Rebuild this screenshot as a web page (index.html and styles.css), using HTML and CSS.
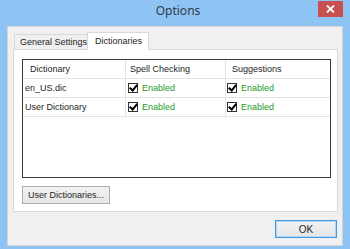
FILE: index.html
```html
<!DOCTYPE html>
<html lang="en">
<head>
  <meta charset="UTF-8" />
  <title>Options</title>
  <link rel="stylesheet" href="styles.css">
</head>
<body>
  <div class="window">
    <div class="titlebar">
      <span></span>
      <span class="title">Options</span>
      <span class="close">
        <svg width="9" height="8" viewBox="0 0 9 8"><path d="M1 0.5 L8 7.5 M8 0.5 L1 7.5" stroke="#fff" stroke-width="1.8"/></svg>
      </span>
    </div>

    <div class="client">
      <div class="tabs">
        <div class="tab">General Settings</div>
        <div class="tab active">Dictionaries</div>
      </div>

      <div class="panel">
        <div class="list">
          <div class="row head">
            <div class="cell c1">Dictionary</div>
            <div class="cell c2">Spell Checking</div>
            <div class="cell c3">Suggestions</div>
          </div>
          <div class="row">
            <div class="cell c1">en_US.dic</div>
            <div class="cell c2"><span class="check"></span><span class="on">Enabled</span></div>
            <div class="cell c3"><span class="check"></span><span class="on">Enabled</span></div>
          </div>
          <div class="row">
            <div class="cell c1">User Dictionary</div>
            <div class="cell c2"><span class="check"></span><span class="on">Enabled</span></div>
            <div class="cell c3"><span class="check"></span><span class="on">Enabled</span></div>
          </div>
        </div>
        <button class="btn">User Dictionaries...</button>
      </div>

      <div class="footer">
        <button class="btn ok">OK</button>
      </div>
    </div>
  </div>
</body>
</html>
```

FILE: styles.css
```css
body {
  margin: 0;
  font-family: "Liberation Sans", Arial, sans-serif;
  font-size: 9px;
  color: #1e1e1e;
}
.window {
  width: 350px;
  height: 249px;
  box-sizing: border-box;
  background: #8ec4f4;
  padding: 0 7px 3px 7px;
  display: flex;
  flex-direction: column;
}
.titlebar {
  flex-shrink: 0;
  height: 26px;
  display: grid;
  grid-template-columns: 1fr auto 1fr;
  align-items: start;
}
.title {
  font-family: "Noto Sans", sans-serif;
  font-size: 12px;
  color: #2f3a46;
  margin-top: 2px;
  margin-left: 6px;
}
.close {
  justify-self: end;
  width: 25px;
  height: 16px;
  margin-top: 1px;
  background: #c75050;
  display: flex;
  align-items: center;
  justify-content: center;
}
.client {
  flex: 1;
  min-height: 0;
  background: #f0f0f0;
  border: 1px solid #d4d4d4;
  padding: 5px 4px 0 5px;
  display: flex;
  flex-direction: column;
}
.tabs {
  flex-shrink: 0;
  display: flex;
  align-items: flex-end;
  padding-left: 1px;
  height: 17px;
}
.tab {
  box-sizing: border-box;
  height: 15px;
  width: 74px;
  padding-left: 5px;
  line-height: 14px;
  border: 1px solid #d9d9d9;
  border-bottom: none;
  background: #f0f0f0;
  white-space: nowrap;
}
.tab.active {
  height: 18px;
  width: 62px;
  line-height: 16px;
  padding-left: 7px;
  background: #fff;
  margin-left: -1px;
  margin-bottom: -1px;
  position: relative;
}
.panel {
  flex-shrink: 0;
  background: #fff;
  border: 1px solid #d9d9d9;
  padding: 9px 6px 7px 8px;
}
.list {
  border: 1px solid #3a3a3a;
  height: 117px;
  background: #fff;
}
.row {
  display: flex;
  height: 18px;
  border-bottom: 1px solid #e3e3e3;
}
.cell {
  display: flex;
  align-items: center;
  border-right: 1px solid #e3e3e3;
  box-sizing: border-box;
  padding-left: 2px;
  white-space: nowrap;
  overflow: hidden;
}
.c1 { width: 103px; }
.c2 { width: 100px; padding-left: 2px; }
.c3 { width: 103px; border-right: none; padding-left: 1px; }
.head .c1 { padding-left: 7px; }
.head .c2 { padding-left: 4px; }
.head .c3 { padding-left: 6px; }
.check {
  width: 8px;
  height: 8px;
  border: 1px solid #333;
  margin-right: 4px;
  position: relative;
}
.check::after {
  content: "";
  position: absolute;
  left: 2px;
  top: -1px;
  width: 3px;
  height: 6px;
  border: solid #000;
  border-width: 0 2px 2px 0;
  transform: rotate(40deg);
}
.on {
  color: #1f9a1f;
}
.btn {
  display: block;
  font-family: inherit;
  font-size: 9px;
  color: #1e1e1e;
  background: linear-gradient(#f2f2f2, #e6e6e6);
  border: 1px solid #acacac;
  height: 18px;
  padding: 0;
  margin-top: 8px;
  width: 88px;
  white-space: nowrap;
}
.footer {
  display: flex;
  justify-content: flex-end;
  padding-right: 1px;
}
.ok {
  width: 62px;
  font-size: 10px;
  border-color: #3c9ae6;
  box-shadow: inset 0 0 0 1px #b0d6f6;
}
```
